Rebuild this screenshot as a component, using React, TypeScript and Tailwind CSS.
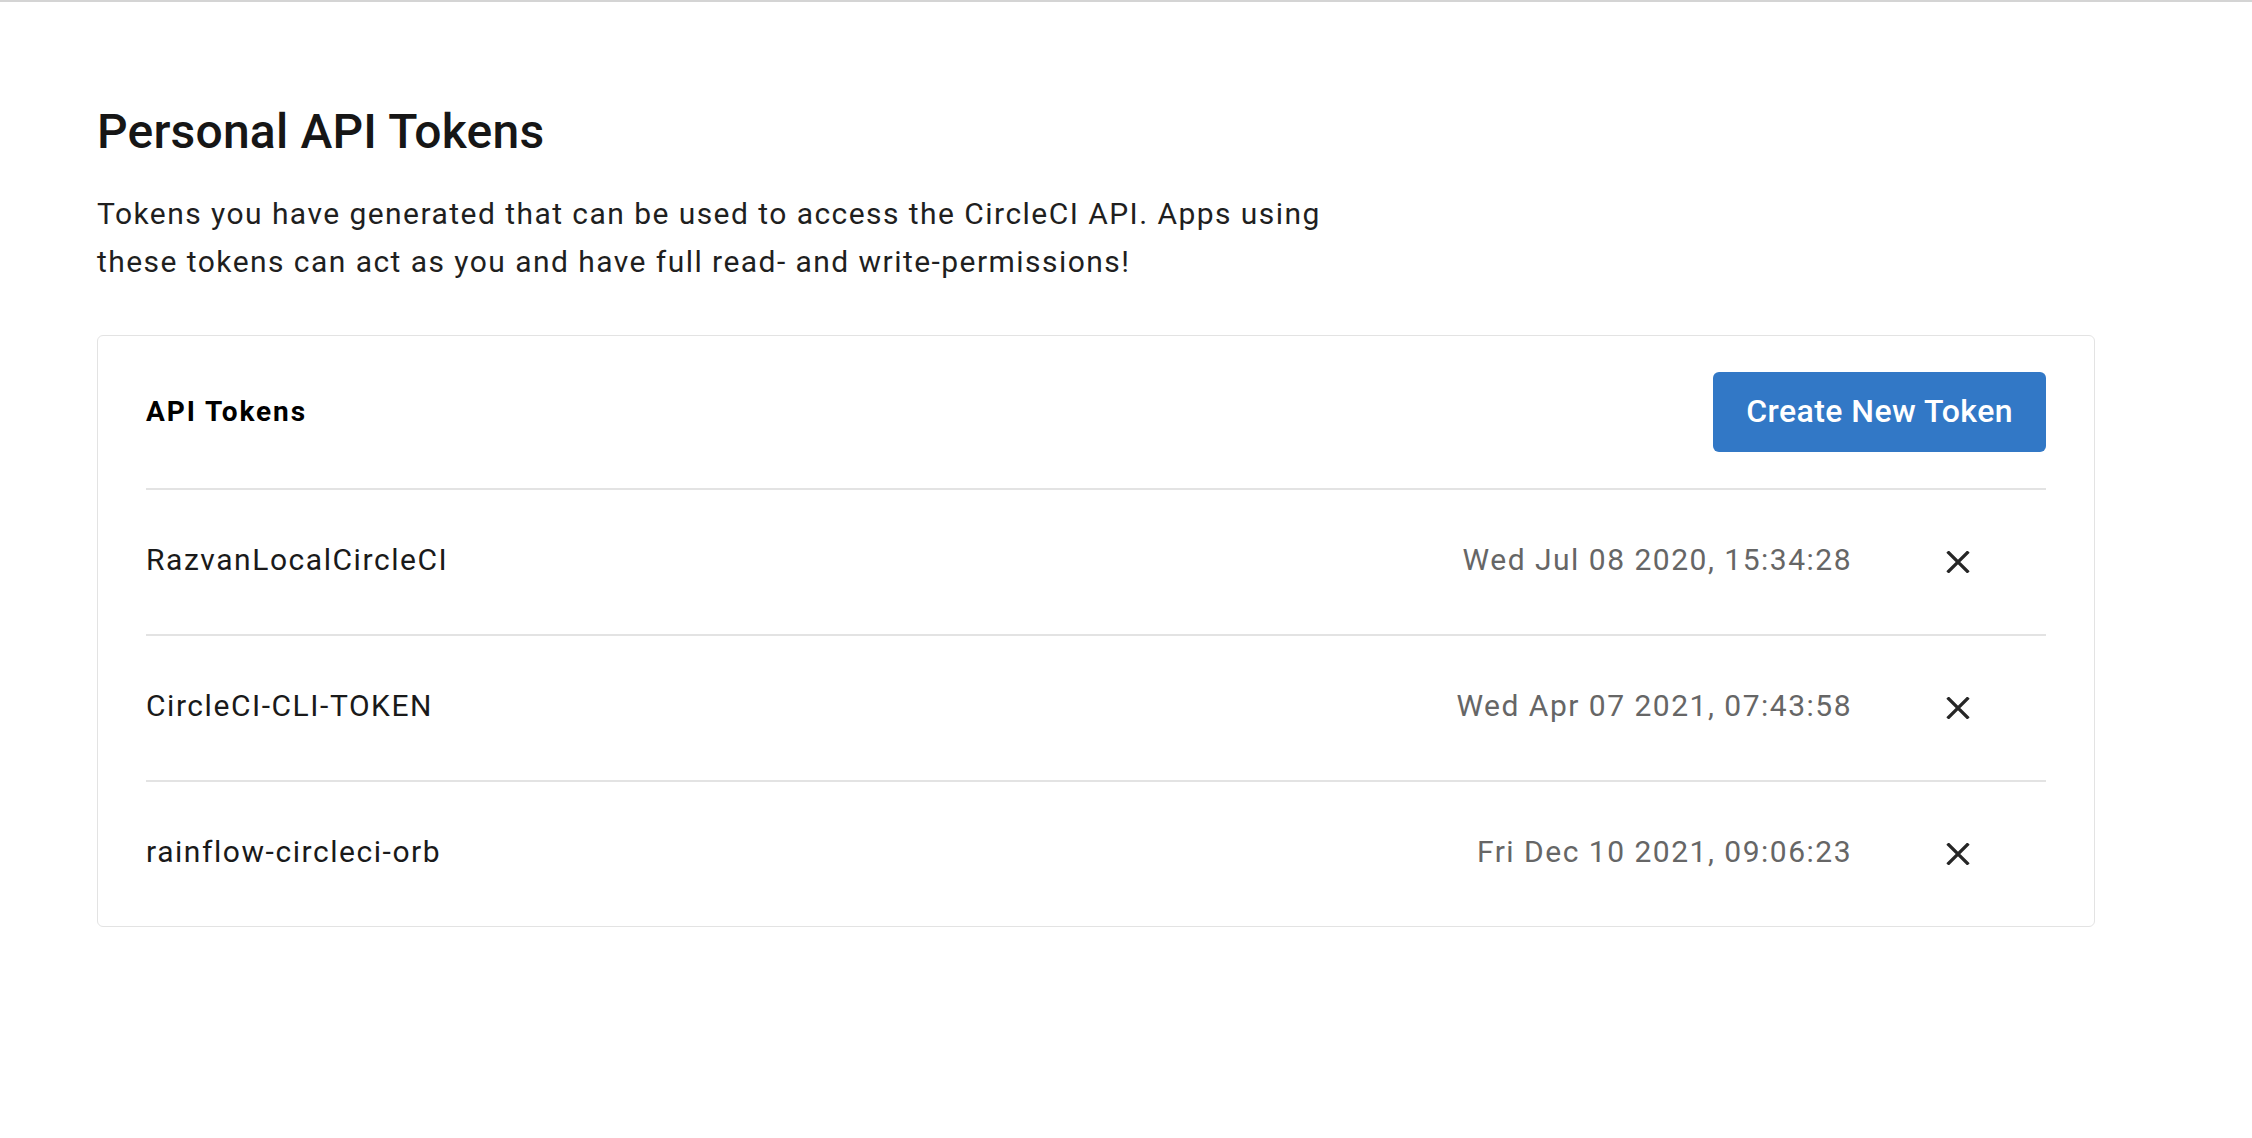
import React from "react";

const tokens = [
  { name: "RazvanLocalCircleCI", date: "Wed Jul 08 2020, 15:34:28" },
  { name: "CircleCI-CLI-TOKEN", date: "Wed Apr 07 2021, 07:43:58" },
  { name: "rainflow-circleci-orb", date: "Fri Dec 10 2021, 09:06:23" },
];

function CloseIcon() {
  return (
    <svg width="24" height="22" viewBox="0 0 24 22" fill="none" aria-hidden="true">
      <path d="M1.5 0.5 L22.5 21.5 M22.5 0.5 L1.5 21.5" stroke="#262626" strokeWidth="3.2" />
    </svg>
  );
}

export default function App() {
  return (
    <div
      className="min-h-screen w-full bg-white border-t-2 border-[#d4d4d4]"
      style={{ fontFamily: "Roboto, 'Noto Sans', Arial, sans-serif" }}
    >
      <div className="pl-[97px] pt-[102px]">
        <h1 className="text-[48px] leading-[56px] font-medium tracking-[0.2px] text-[#161616]">
          Personal API Tokens
        </h1>
        <p className="mt-[30px] w-[1260px] text-[30px] leading-[48px] tracking-[1.45px] text-[#1f1f1f]">
          Tokens you have generated that can be used to access the CircleCI API. Apps using these
          tokens can act as you and have full read- and write-permissions!
        </p>
        <div className="mt-[49px] w-[1998px] rounded-[6px] border border-[#e3e3e3] px-[48px]">
          <div className="flex items-center justify-between pt-[36px] pb-[36px]">
            <h2 className="text-[28px] font-bold tracking-[1.9px] text-black">API Tokens</h2>
            <button className="h-[80px] rounded-[6px] bg-[#3278c6] px-[33px] pb-[2px] text-[32px] font-medium tracking-[0.45px] text-white">
              Create New Token
            </button>
          </div>
          {tokens.map((t) => (
            <div
              key={t.name}
              className="flex h-[146px] items-center border-t-2 border-[#e3e3e3] pb-[5px]"
            >
              <span className="flex-1 text-[30px] tracking-[1.55px] text-[#1a1a1a]">{t.name}</span>
              <span className="text-[30px] tracking-[1.5px] text-[#666666]">{t.date}</span>
              <span className="ml-[94px] mr-[76px] flex pt-[5px]">
                <CloseIcon />
              </span>
            </div>
          ))}
        </div>
      </div>
    </div>
  );
}
